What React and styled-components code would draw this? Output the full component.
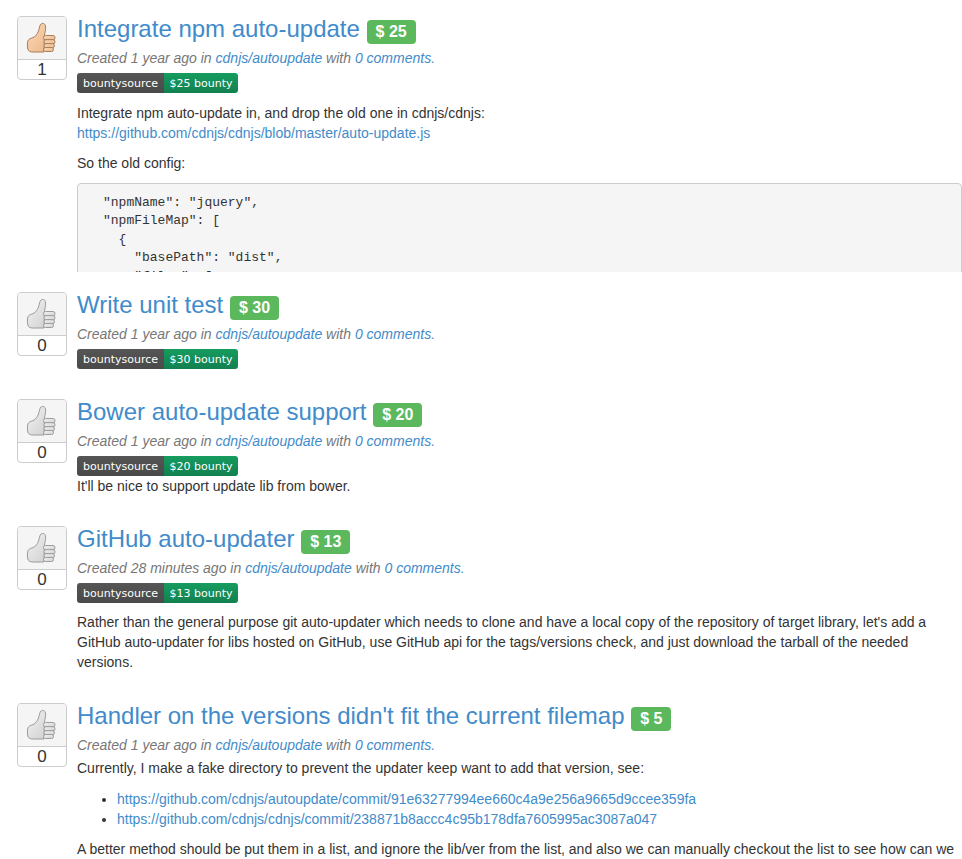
import React from "react";
import styled, { createGlobalStyle } from "styled-components";

const GlobalStyle = createGlobalStyle`
  html, body {
    margin: 0;
    padding: 0;
    height: 859px;
    overflow: hidden;
    background: #fff;
  }
  body {
    font-family: "Liberation Sans", Arial, sans-serif;
    font-size: 14px;
    line-height: 20px;
    color: #333;
  }
  a {
    color: #428bca;
    text-decoration: none;
  }
`;

const List = styled.div`
  padding: 16px 0 0 17px;
`;

const Issue = styled.div`
  display: flex;
  gap: 10px;
  margin-bottom: ${({ $after }) => $after}px;
  height: ${({ $height }) => ($height ? `${$height}px` : "auto")};
  overflow: hidden;
`;

const Vote = styled.div`
  flex: none;
  width: 50px;
  height: 64px;
  box-sizing: border-box;
  border: 1px solid #ccc;
  border-radius: 4px;
  display: flex;
  flex-direction: column;
`;

const VoteThumb = styled.div`
  height: 42px;
  flex: none;
  background: #f5f5f5;
  border-bottom: 1px solid #ccc;
  border-radius: 3px 3px 0 0;
  display: flex;
  align-items: center;
  justify-content: center;
`;

const VoteCount = styled.div`
  flex: 1;
  font-size: 17px;
  line-height: 20px;
  text-align: center;
  color: #333;
`;

const Body = styled.div`
  flex: 1;
  min-width: 0;
`;

const Title = styled.h3`
  margin: 0 0 4px;
  font-size: 24px;
  font-weight: 500;
  line-height: 26px;
`;

const Amount = styled.span`
  display: inline-block;
  padding: 3px 9px;
  border-radius: 4px;
  background: #5cb85c;
  color: #fff;
  font-size: 16px;
  font-weight: 700;
  line-height: 18px;
`;

const Meta = styled.div`
  color: #777;
  font-style: italic;
  margin-bottom: ${({ $after }) => $after}px;
`;

const Badge = styled.div`
  display: flex;
  width: 161px;
  height: 20px;
  border-radius: 3px;
  overflow: hidden;
  font-family: "DejaVu Sans", Verdana, sans-serif;
  font-size: 11px;
  line-height: 21px;
  color: #fff;
  margin-bottom: ${({ $gap }) => $gap}px;
`;

const BadgeName = styled.span`
  width: 87px;
  text-align: center;
  background: linear-gradient(#555, #4a4a4a);
`;

const BadgeValue = styled.span`
  flex: 1;
  text-align: center;
  background: linear-gradient(#169c5f, #128050);
`;

const Para = styled.p`
  margin: 0 0 10px;
`;

const LeadPara = styled(Para)`
  margin-bottom: 11px;
`;

const Code = styled.pre`
  margin: 0;
  padding: 9.5px;
  padding-left: 25px;
  background: #f5f5f5;
  border: 1px solid #ccc;
  border-radius: 4px;
  font-family: "Liberation Mono", monospace;
  font-size: 13px;
  line-height: 18.5px;
  color: #333;
`;

const Links = styled.ul`
  margin: 0 0 10px;
  padding-left: 40px;
`;

const Thumb = ({ active }) => {
  const id = active ? "thumbOn" : "thumbOff";
  const line = active ? "#a87f5c" : "#9c9c9c";
  const fingers = [
    [17.5, 13.5, 11.5, 4.4],
    [18, 17.7, 11, 4.2],
    [18, 21.7, 10.5, 4],
    [17.5, 25.5, 10, 4],
  ];
  return (
    <svg width="32" height="32" viewBox="0 0 32 32">
      <defs>
        <linearGradient id={id} x1="0" y1="0" x2="0.8" y2="1">
          <stop offset="0" stopColor={active ? "#fbdcbc" : "#f4f4f4"} />
          <stop offset="1" stopColor={active ? "#eebb8e" : "#d4d4d4"} />
        </linearGradient>
      </defs>
      <path
        d="M1.5 21 C1.5 18 3.5 16.5 6 16 C9 15 11 13 12.5 9 C13.5 6 13.5 3.5 15 2 C16.5 0.8 19 1.3 19.5 4 C20 7 19 10 18.5 13 L18 30 L7 30 C4.5 30 2.5 29.5 1.8 27 C1.3 25 1.3 23 1.5 21 Z"
        fill={`url(#${id})`}
        stroke={line}
        strokeWidth="1"
      />
      {fingers.map(([x, y, w, h]) => (
        <rect
          key={y}
          x={x}
          y={y}
          width={w}
          height={h}
          rx="2"
          fill={`url(#${id})`}
          stroke={line}
          strokeWidth="1"
        />
      ))}
    </svg>
  );
};

const IssueMeta = ({ age, after, repo = "cdnjs/autoupdate" }) => (
  <Meta $after={after}>
    Created {age} ago in <a href="#">{repo}</a> with <a href="#">0 comments.</a>
  </Meta>
);

const issues = [
  { title: "Integrate npm auto-update", amount: 25, votes: 1, age: "1 year", gap: 10, height: 256, after: 20 },
  { title: "Write unit test", amount: 30, votes: 0, age: "1 year", gap: 10, after: 20 },
  { title: "Bower auto-update support", amount: 20, votes: 0, age: "1 year", gap: 0, after: 20 },
  { title: "GitHub auto-updater", amount: 13, votes: 0, age: "28 minutes", gap: 9, after: 21 },
  { title: "Handler on the versions didn't fit the current filemap", amount: 5, votes: 0, age: "1 year", noBadge: true, after: 0 },
];

const bodies = [
  <>
    <Para>
      Integrate npm auto-update in, and drop the old one in cdnjs/cdnjs:
      <br />
      <a href="#">https://github.com/cdnjs/cdnjs/blob/master/auto-update.js</a>
    </Para>
    <Para>So the old config:</Para>
    <Code>{`"npmName": "jquery",
"npmFileMap": [
  {
    "basePath": "dist",
    "files": [`}</Code>
  </>,
  null,
  <Para>It'll be nice to support update lib from bower.</Para>,
  <Para>
    Rather than the general purpose git auto-updater which needs to clone and have a local copy of the repository of
    target library, let's add a GitHub auto-updater for libs hosted on GitHub, use GitHub api for the tags/versions
    check, and just download the tarball of the needed versions.
  </Para>,
  <>
    <LeadPara>Currently, I make a fake directory to prevent the updater keep want to add that version, see:</LeadPara>
    <Links>
      <li>
        <a href="#">https://github.com/cdnjs/autoupdate/commit/91e63277994ee660c4a9e256a9665d9ccee359fa</a>
      </li>
      <li>
        <a href="#">https://github.com/cdnjs/cdnjs/commit/238871b8accc4c95b178dfa7605995ac3087a047</a>
      </li>
    </Links>
    <Para>
      A better method should be put them in a list, and ignore the lib/ver from the list, and also we can manually
      checkout the list to see how can we
    </Para>
  </>,
];

export default function App() {
  return (
    <>
      <GlobalStyle />
      <List>
        {issues.map((issue, i) => (
          <Issue key={issue.title} $height={issue.height} $after={issue.after}>
            <Vote>
              <VoteThumb>
                <Thumb active={issue.votes > 0} />
              </VoteThumb>
              <VoteCount>{issue.votes}</VoteCount>
            </Vote>
            <Body>
              <Title>
                <a href="#">{issue.title}</a> <Amount>$ {issue.amount}</Amount>
              </Title>
              <IssueMeta age={issue.age} after={issue.noBadge ? 3 : 5} />
              {!issue.noBadge && (
                <Badge $gap={issue.gap}>
                  <BadgeName>bountysource</BadgeName>
                  <BadgeValue>${issue.amount} bounty</BadgeValue>
                </Badge>
              )}
              {bodies[i]}
            </Body>
          </Issue>
        ))}
      </List>
    </>
  );
}
